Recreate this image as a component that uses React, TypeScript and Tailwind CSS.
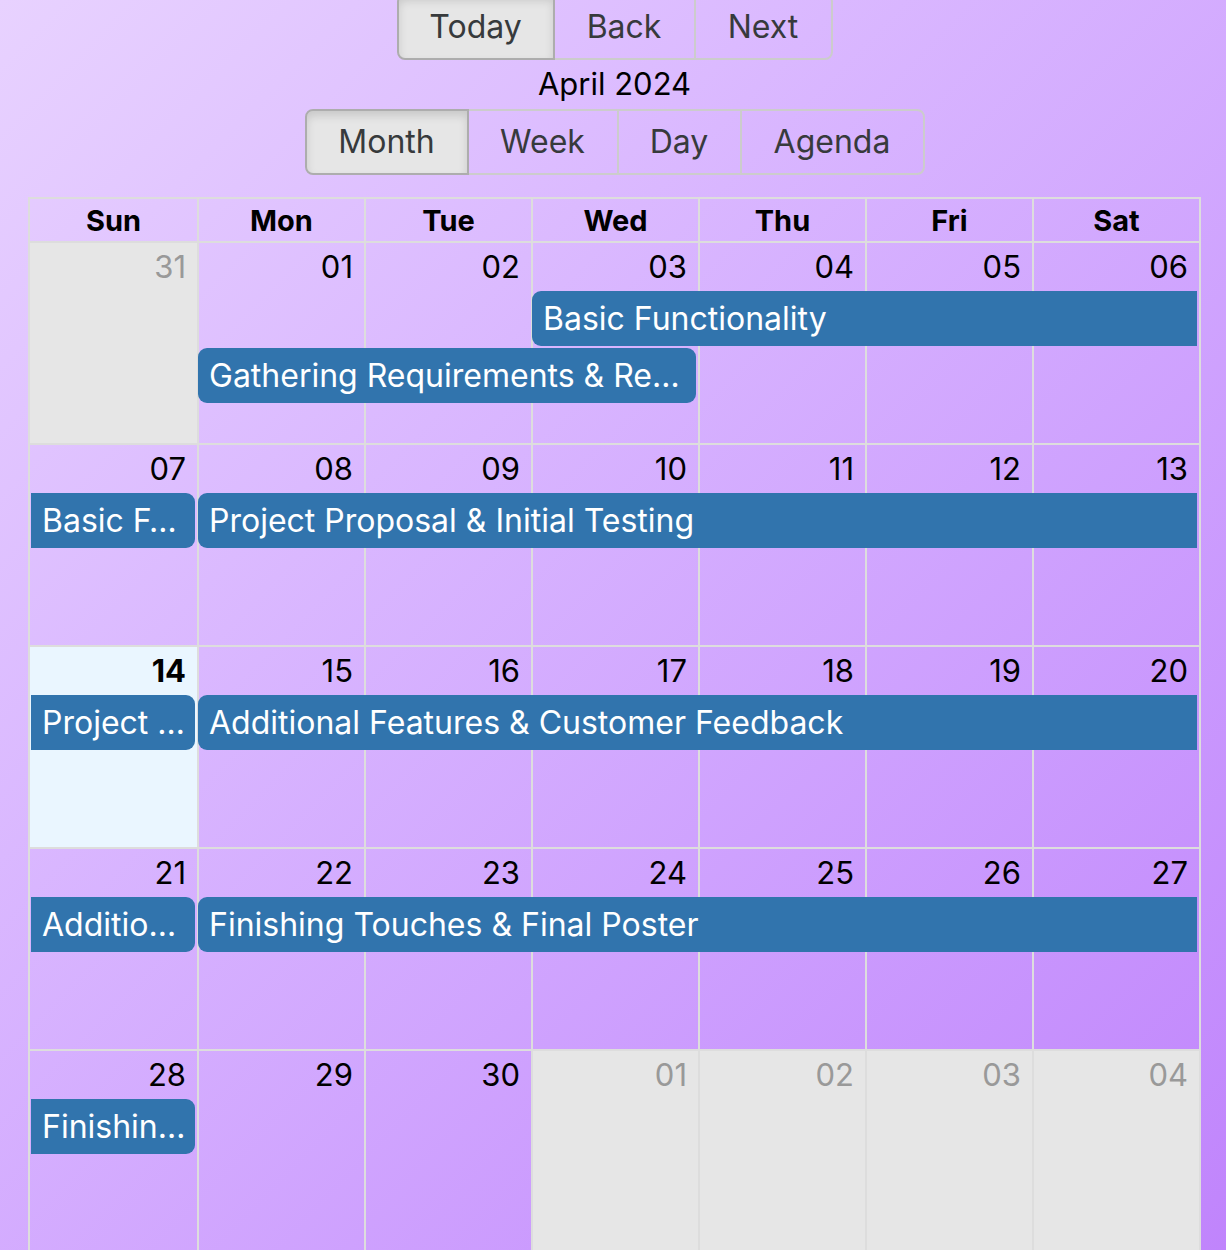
import React from "react";

type Ev = { title: string; col: number; span: number; row: number; prior?: boolean; after?: boolean };
type Day = { n: string; off?: boolean; today?: boolean };

const colStart = ["col-start-1", "col-start-2", "col-start-3", "col-start-4", "col-start-5", "col-start-6", "col-start-7"];
const colSpan = ["col-span-1", "col-span-2", "col-span-3", "col-span-4", "col-span-5", "col-span-6", "col-span-7"];
const rowStart = ["row-start-1", "row-start-2", "row-start-3", "row-start-4"];

const weeks: { days: Day[]; events: Ev[] }[] = [
  {
    days: [{ n: "31", off: true }, { n: "01" }, { n: "02" }, { n: "03" }, { n: "04" }, { n: "05" }, { n: "06" }],
    events: [
      { title: "Basic Functionality", col: 4, span: 4, row: 2, after: true },
      { title: "Gathering Requirements & Re…", col: 2, span: 3, row: 3 },
    ],
  },
  {
    days: [{ n: "07" }, { n: "08" }, { n: "09" }, { n: "10" }, { n: "11" }, { n: "12" }, { n: "13" }],
    events: [
      { title: "Basic F…", col: 1, span: 1, row: 2, prior: true },
      { title: "Project Proposal & Initial Testing", col: 2, span: 6, row: 2, after: true },
    ],
  },
  {
    days: [{ n: "14", today: true }, { n: "15" }, { n: "16" }, { n: "17" }, { n: "18" }, { n: "19" }, { n: "20" }],
    events: [
      { title: "Project …", col: 1, span: 1, row: 2, prior: true },
      { title: "Additional Features & Customer Feedback", col: 2, span: 6, row: 2, after: true },
    ],
  },
  {
    days: [{ n: "21" }, { n: "22" }, { n: "23" }, { n: "24" }, { n: "25" }, { n: "26" }, { n: "27" }],
    events: [
      { title: "Additio…", col: 1, span: 1, row: 2, prior: true },
      { title: "Finishing Touches & Final Poster", col: 2, span: 6, row: 2, after: true },
    ],
  },
  {
    days: [{ n: "28" }, { n: "29" }, { n: "30" }, { n: "01", off: true }, { n: "02", off: true }, { n: "03", off: true }, { n: "04", off: true }],
    events: [{ title: "Finishin…", col: 1, span: 1, row: 2, prior: true }],
  },
];

function radius(e: Ev) {
  if (e.prior && e.after) return "";
  if (e.prior) return "rounded-r-[9px]";
  if (e.after) return "rounded-l-[9px]";
  return "rounded-[9px]";
}

function Btn({ label, w, active, first, last }: { label: string; w: string; active?: boolean; first?: boolean; last?: boolean }) {
  return (
    <button
      className={[
        "h-full flex items-center justify-center border-2 text-[32px] text-[#373a3c]",
        w,
        first ? "rounded-l-[8px]" : "-ml-[2px]",
        last ? "rounded-r-[8px]" : "",
        active
          ? "relative z-10 bg-[#e6e6e6] border-[#adadad] shadow-[inset_0_5px_9px_rgba(0,0,0,0.125)]"
          : "bg-transparent border-[#cccccc]",
      ].join(" ")}
    >
      {label}
    </button>
  );
}

export default function App() {
  return (
    <div className="h-[1250px] w-full overflow-hidden bg-linear-to-br from-[#e8d2ff] to-[#c084fc] font-['Inter',sans-serif]">
      <div className="ml-[28px] w-[1173px] flex flex-col items-center">
        <div className="-mt-[6px] h-[66px] flex">
          <Btn label="Today" w="w-[158px]" active first />
          <Btn label="Back" w="w-[143px]" />
          <Btn label="Next" w="w-[139px]" last />
        </div>
        <div className="h-[49px] flex items-center justify-center text-[31px] text-black">April 2024</div>
        <div className="h-[66px] flex">
          <Btn label="Month" w="w-[164px]" active first />
          <Btn label="Week" w="w-[152px]" />
          <Btn label="Day" w="w-[125px]" />
          <Btn label="Agenda" w="w-[185px]" last />
        </div>
      </div>

      <div className="mt-[22px] ml-[28px] w-[1173px] border-2 border-[#dddddd]">
        <div className="grid grid-cols-7 h-[42px]">
          {["Sun", "Mon", "Tue", "Wed", "Thu", "Fri", "Sat"].map((d, i) => (
            <div
              key={d}
              className={"flex items-center justify-center text-[29px] font-bold text-black " + (i > 0 ? "border-l-2 border-[#dddddd]" : "")}
            >
              {d}
            </div>
          ))}
        </div>
        {weeks.map((w, wi) => (
          <div key={wi} className="grid grid-cols-7 grid-rows-[48px_57px_57px_1fr] h-[202px] border-t-2 border-[#dddddd]">
            {w.days.map((d, i) => (
              <div
                key={i}
                className={[
                  colStart[i],
                  "row-start-1 row-end-5",
                  i > 0 ? "border-l-2 border-[#dddddd]" : "",
                  d.off ? "bg-[#e6e6e6]" : d.today ? "bg-[#eaf6ff]" : "",
                ].join(" ")}
              >
                <div
                  className={[
                    "h-[48px] flex items-center justify-end pr-[11px] text-[31px]",
                    d.off ? "text-[#999999]" : "text-black",
                    d.today ? "font-bold" : "",
                  ].join(" ")}
                >
                  {d.n}
                </div>
              </div>
            ))}
            {w.events.map((e, ei) => (
              <div key={ei} className={[colStart[e.col - 1], colSpan[e.span - 1], rowStart[e.row - 1], "pl-[1px] pr-[2px] pb-[2px] min-w-0"].join(" ")}>
                <div
                  className={[
                    "h-[55px] flex items-center px-[11px] bg-[#3174ad] text-white text-[32px] whitespace-nowrap overflow-hidden",
                    radius(e),
                  ].join(" ")}
                >
                  {e.title}
                </div>
              </div>
            ))}
          </div>
        ))}
      </div>
    </div>
  );
}
